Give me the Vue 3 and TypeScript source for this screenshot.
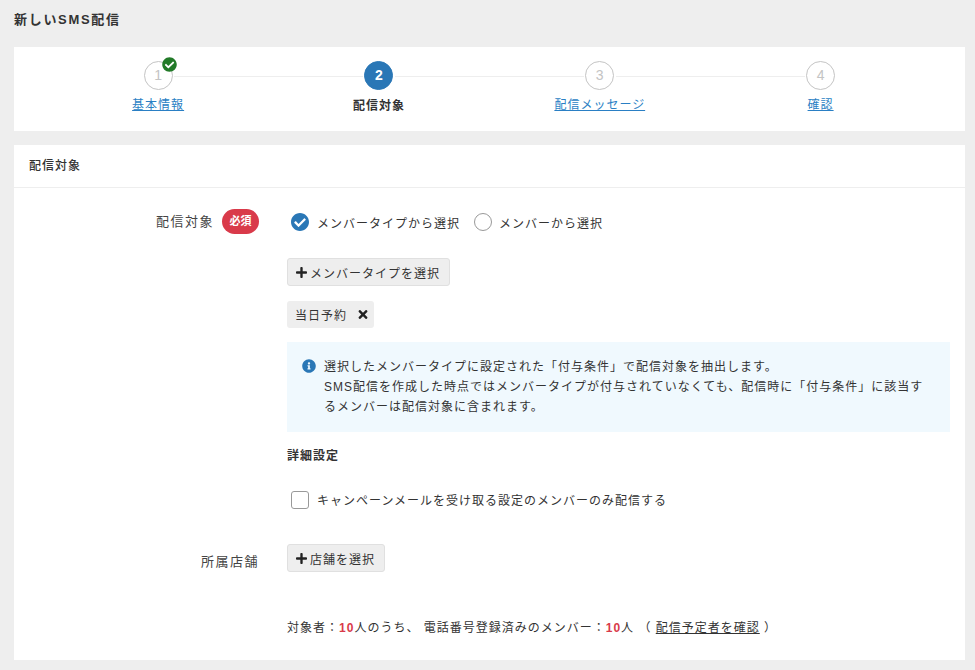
<script setup lang="ts">
const checkPath =
  'M504 256c0 136.967-111.033 248-248 248S8 392.967 8 256 119.033 8 256 8s248 111.033 248 248zM227.314 387.314l184-184c6.248-6.248 6.248-16.379 0-22.627l-22.627-22.627c-6.248-6.249-16.379-6.249-22.628 0L216 308.118l-70.059-70.059c-6.248-6.248-16.379-6.248-22.628 0l-22.627 22.627c-6.248 6.248-6.248 16.379 0 22.627l104 104c6.249 6.249 16.379 6.249 22.628.001z'
const plusPath =
  'M416 208H272V64c0-17.67-14.33-32-32-32h-32c-17.67 0-32 14.33-32 32v144H32c-17.67 0-32 14.33-32 32v32c0 17.67 14.33 32 32 32h144v144c0 17.67 14.33 32 32 32h32c17.67 0 32-14.33 32-32V304h144c17.67 0 32-14.33 32-32v-32c0-17.67-14.33-32-32-32z'

const steps = [
  { no: 1, label: '基本情報', state: 'done' },
  { no: 2, label: '配信対象', state: 'current' },
  { no: 3, label: '配信メッセージ', state: 'todo' },
  { no: 4, label: '確認', state: 'todo' },
]
</script>

<template>
  <div class="page">
    <h1 class="title">新しいSMS配信</h1>

    <section class="card stepper">
      <div v-for="step in steps" :key="step.no" class="step" :class="step.state">
        <div class="circle">
          {{ step.no }}
          <svg v-if="step.state === 'done'" class="done-mark" viewBox="0 0 512 512">
            <circle cx="256" cy="256" r="200" fill="#fff" />
            <path :d="checkPath" fill="#227a28" />
          </svg>
        </div>
        <span v-if="step.state === 'current'" class="step-label">{{ step.label }}</span>
        <a v-else class="step-label" href="#">{{ step.label }}</a>
      </div>
    </section>

    <section class="card form-card">
      <header class="card-head">配信対象</header>

      <div class="card-body">
        <div class="row">
          <div class="label first">
            <span>配信対象</span>
            <span class="required">必須</span>
          </div>
          <div class="control">
            <div class="radios">
              <label class="radio">
                <svg class="radio-on" viewBox="8 8 496 496">
                  <path :d="checkPath" fill="#2a77b6" />
                </svg>
                メンバータイプから選択
              </label>
              <label class="radio">
                <span class="radio-off"></span>
                メンバーから選択
              </label>
            </div>

            <button class="add-btn" type="button">
              <svg class="plus" viewBox="0 0 448 512"><path :d="plusPath" /></svg>
              メンバータイプを選択
            </button>

            <div class="chip">
              当日予約
              <svg class="times" viewBox="0 0 352 512">
                <path d="M242.72 256l100.07-100.07c12.28-12.28 12.28-32.19 0-44.48l-22.24-22.24c-12.28-12.28-32.19-12.28-44.48 0L176 189.28 75.93 89.21c-12.28-12.28-32.19-12.28-44.48 0L9.21 111.45c-12.28 12.28-12.28 32.19 0 44.48L109.28 256 9.21 356.07c-12.28 12.28-12.28 32.19 0 44.48l22.24 22.24c12.28 12.28 32.2 12.28 44.48 0L176 322.72l100.07 100.07c12.28 12.28 32.2 12.28 44.48 0l22.24-22.24c12.28-12.28 12.28-32.19 0-44.48L242.72 256z" />
              </svg>
            </div>

            <div class="info">
              <svg class="info-icon" viewBox="0 0 512 512">
                <path d="M256 8C119.043 8 8 119.083 8 256c0 136.997 111.043 248 248 248s248-111.003 248-248C504 119.083 392.957 8 256 8zm0 110c23.196 0 42 18.804 42 42s-18.804 42-42 42-42-18.804-42-42 18.804-42 42-42zm56 254c0 6.627-5.373 12-12 12h-88c-6.627 0-12-5.373-12-12v-24c0-6.627 5.373-12 12-12h12v-64h-12c-6.627 0-12-5.373-12-12v-24c0-6.627 5.373-12 12-12h64c6.627 0 12 5.373 12 12v100h12c6.627 0 12 5.373 12 12v24z" />
              </svg>
              <p>
                選択したメンバータイプに設定された「付与条件」で配信対象を抽出します。<br />
                SMS配信を作成した時点ではメンバータイプが付与されていなくても、配信時に「付与条件」に該当するメンバーは配信対象に含まれます。
              </p>
            </div>

            <h2 class="sub-title">詳細設定</h2>

            <label class="check">
              <span class="check-box"></span>
              キャンペーンメールを受け取る設定のメンバーのみ配信する
            </label>
          </div>
        </div>

        <div class="row shop-row">
          <div class="label">所属店舗</div>
          <div class="control">
            <button class="add-btn" type="button">
              <svg class="plus" viewBox="0 0 448 512"><path :d="plusPath" /></svg>
              店舗を選択
            </button>
          </div>
        </div>

        <p class="summary">
          対象者：<b>10</b>人のうち、 電話番号登録済みのメンバー：<b>10</b>人 （ <a href="#">配信予定者を確認</a> ）
        </p>
      </div>
    </section>
  </div>
</template>

<style>
html,
body {
  margin: 0;
  background: #eee;
}
</style>

<style scoped>
.page {
  box-sizing: border-box;
  height: 670px;
  padding: 10px 10px 0 14px;
  overflow: hidden;
  background: #eee;
  color: #333;
  font-family: 'Liberation Sans', 'Noto Sans CJK JP', sans-serif;
  font-size: 12px;
  letter-spacing: 1px;
}

.title {
  margin: 0 0 18px;
  font-size: 13px;
  line-height: 19px;
  font-weight: 700;
  letter-spacing: 1.7px;
}

.card {
  background: #fff;
}

/* ステップ表示 */
.stepper {
  display: grid;
  grid-template-columns: repeat(4, 1fr);
  height: 84px;
  padding: 14px 34px 0 33.7px;
  box-sizing: border-box;
  margin-bottom: 14px;
}

.step {
  position: relative;
  display: flex;
  flex-direction: column;
  align-items: center;
}

.step:not(:last-child)::after {
  content: '';
  position: absolute;
  top: 15px;
  left: calc(50% + 16px);
  width: calc(100% - 32px);
  height: 1px;
  background: #eee;
}

.circle {
  position: relative;
  box-sizing: border-box;
  width: 29px;
  height: 29px;
  border: 1px solid #c4c4c4;
  border-radius: 50%;
  color: #c4c4c4;
  font-size: 14px;
  line-height: 27px;
  text-align: center;
  letter-spacing: 0;
}

.current .circle {
  border-color: #2a77b6;
  background: #2a77b6;
  color: #fff;
  font-weight: 700;
}

.done-mark {
  position: absolute;
  top: -5px;
  right: -5px;
  width: 15px;
  height: 15px;
}

.step-label {
  margin-top: 6px;
  line-height: 18px;
  color: #2a7fc4;
}

.current .step-label {
  color: #333;
  font-weight: 700;
  margin-top: 7px;
}

/* フォーム */
.form-card {
  height: 515px;
}

.card-head {
  height: 43px;
  padding-left: 15px;
  line-height: 43px;
  border-bottom: 1px solid #eee;
  box-sizing: border-box;
  font-weight: 500;
}

.card-body {
  padding: 19px 15px 0;
}

.row {
  display: flex;
}

.label {
  flex: 0 0 258px;
  box-sizing: border-box;
  padding-right: 28px;
  padding-top: 4px;
  display: flex;
  justify-content: flex-end;
  align-items: center;
  gap: 8px;
  font-size: 13px;
  letter-spacing: 1.5px;
  color: #444;
}

.label.first {
  align-self: flex-start;
  flex-basis: 230px;
  height: 26px;
  padding: 0;
  margin-right: 28px;
}

.required {
  margin-top: 2px;
  padding: 0 7.5px;
  border-radius: 13px;
  background: #d93a4a;
  color: #fff;
  font-size: 11px;
  font-weight: 700;
  line-height: 25px;
  letter-spacing: 0;
}

.control {
  flex: 1;
  min-width: 0;
}

.radios {
  display: flex;
  gap: 14px;
  height: 30px;
  padding-left: 4px;
  margin-bottom: 21px;
}

.radio,
.check {
  display: flex;
  align-items: center;
  gap: 8px;
}

.radio-on {
  width: 18px;
  height: 18px;
}

.radio-off {
  box-sizing: border-box;
  width: 18px;
  height: 18px;
  margin-right: -1px;
  border: 1px solid #999;
  border-radius: 50%;
}

.add-btn {
  display: flex;
  align-items: center;
  gap: 3px;
  box-sizing: border-box;
  height: 28px;
  padding: 0 8.5px 0 8px;
  border: 1px solid #e0e0e0;
  border-radius: 3px;
  background: #eee;
  color: #333;
  font: inherit;
  letter-spacing: inherit;
}

.plus {
  width: 11px;
  height: 13px;
  fill: #222;
}

.chip {
  display: inline-flex;
  align-items: center;
  gap: 11px;
  box-sizing: border-box;
  height: 27px;
  margin-top: 15px;
  padding: 0 6px 0 8px;
  border-radius: 3px;
  background: #eee;
}

.times {
  width: 10px;
  height: 13px;
  fill: #222;
}

.info {
  display: flex;
  gap: 8px;
  box-sizing: border-box;
  height: 90px;
  margin-top: 14px;
  padding: 15px 15px 0;
  background: #f0f9fe;
}

.info-icon {
  flex: none;
  width: 14px;
  height: 14px;
  margin-top: 2px;
  fill: #2a77b6;
}

.info p {
  margin: 0;
  line-height: 20px;
}

.sub-title {
  margin: 15px 0 0;
  font-size: 12px;
  line-height: 18px;
  font-weight: 700;
}

.check {
  height: 20px;
  margin-top: 24px;
  padding-left: 4px;
}

.check-box {
  box-sizing: border-box;
  width: 18px;
  height: 18px;
  margin-top: 2px;
  border: 1px solid #999;
  border-radius: 3px;
}

.shop-row {
  margin-top: 35px;
}

.summary {
  margin: 46px 0 0 258px;
  line-height: 20px;
}

.summary b {
  color: #d93a4a;
}

.summary a {
  color: #333;
}
</style>
